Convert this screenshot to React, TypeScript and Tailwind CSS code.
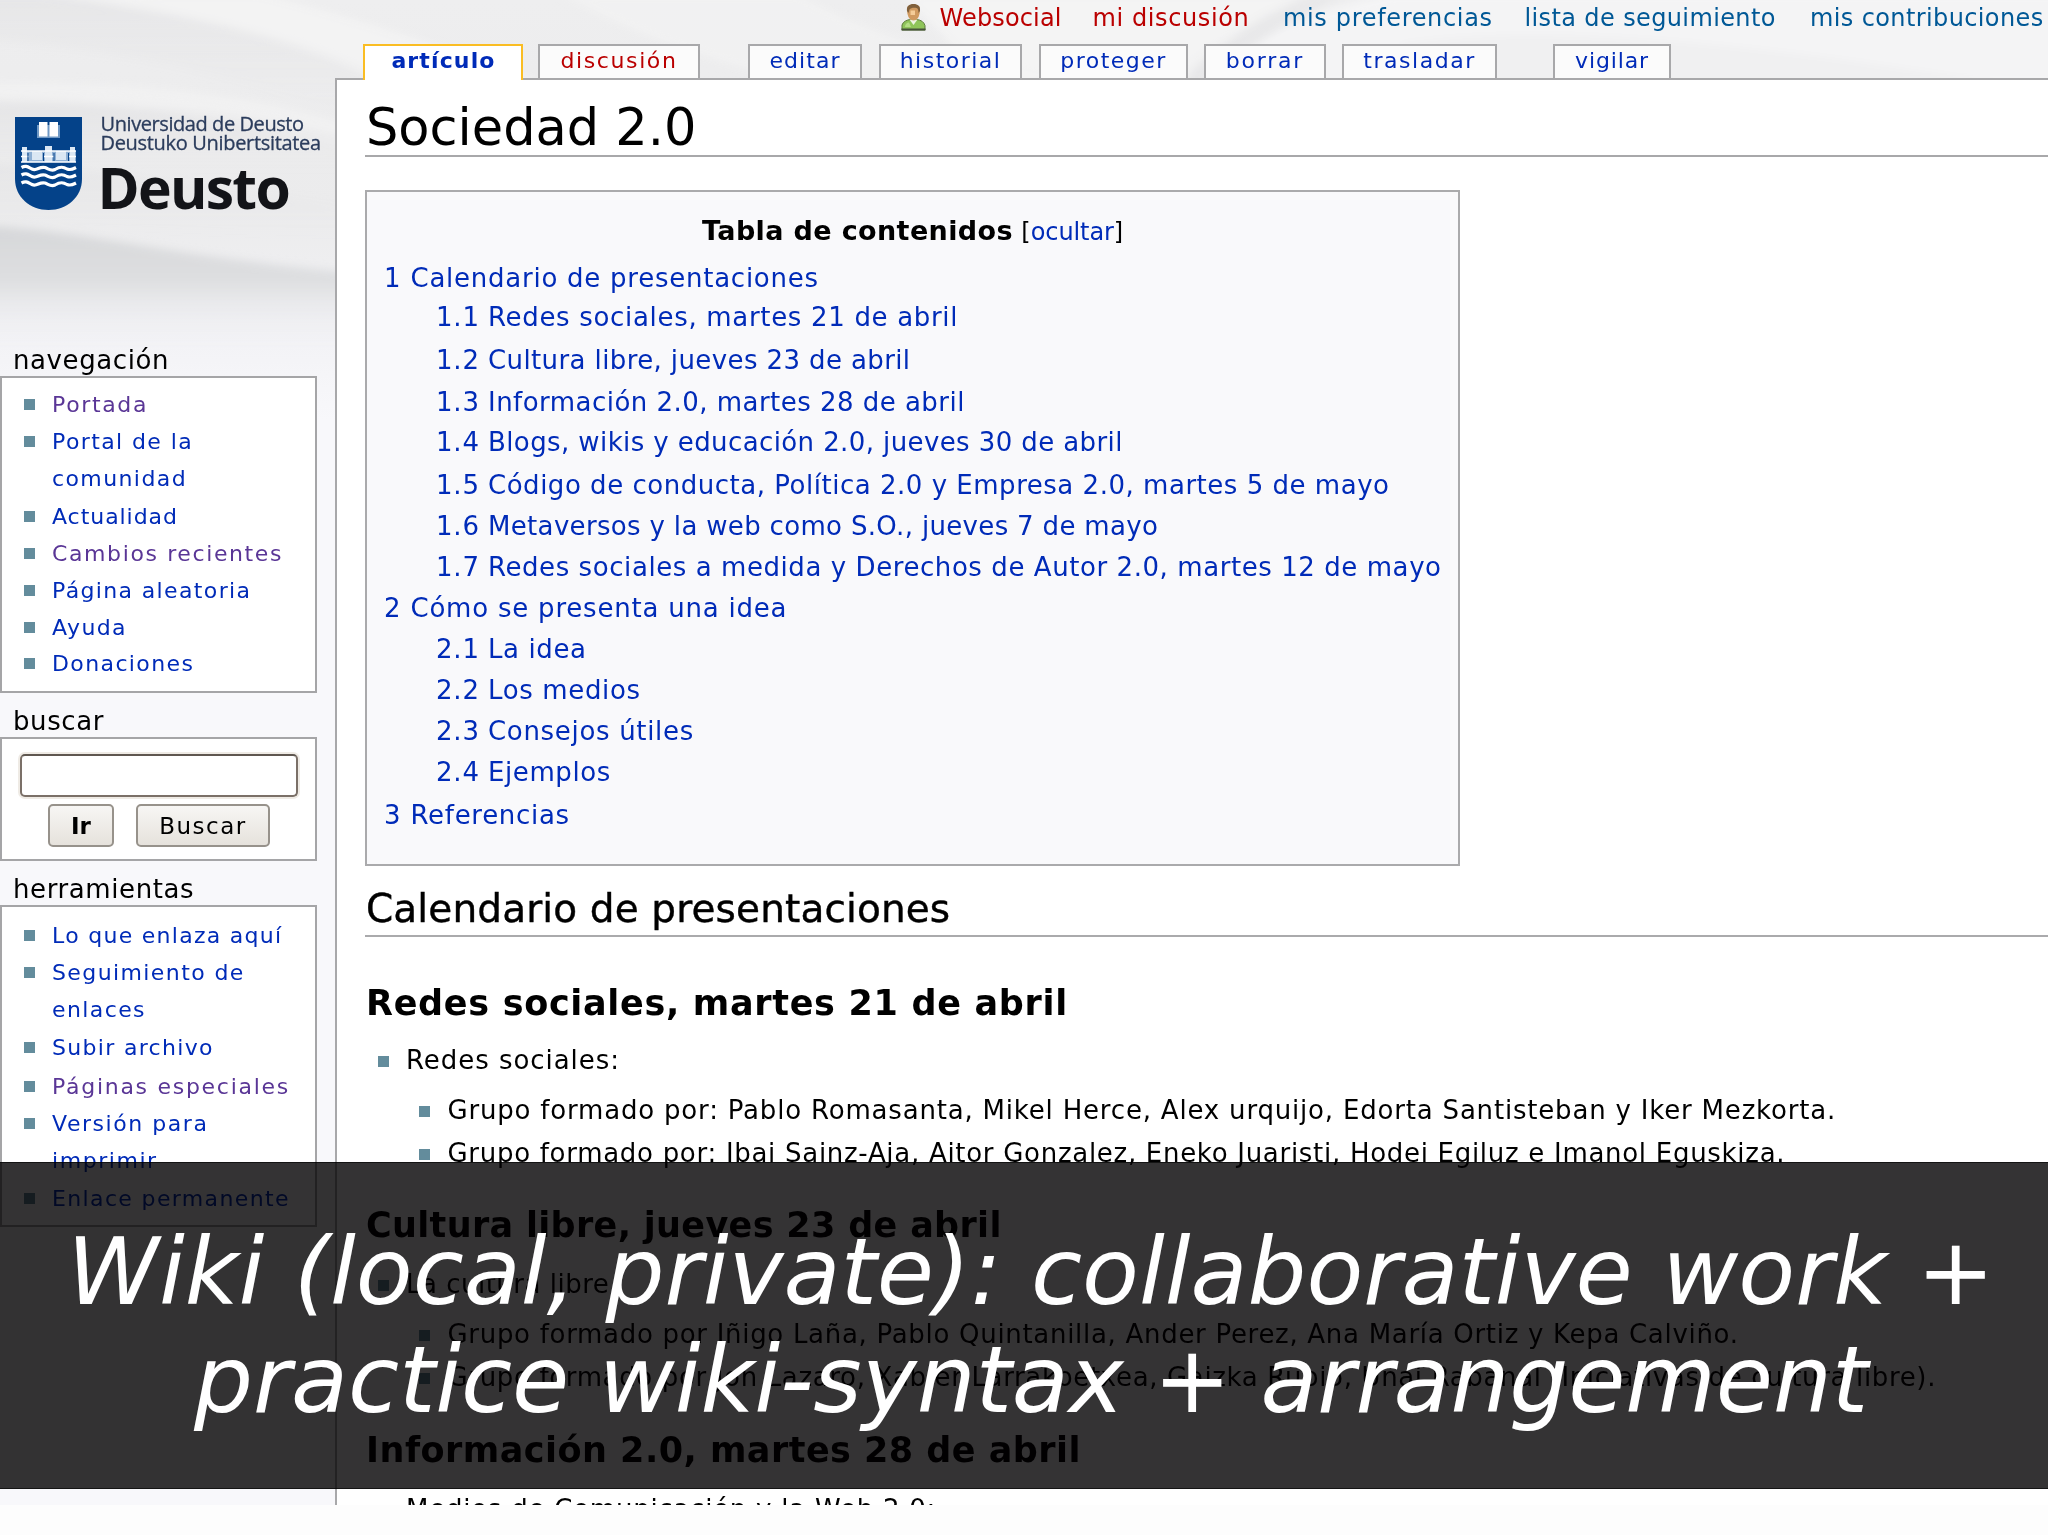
import React from 'react';
import clsx from 'clsx';

interface NavLink {
  lines: string[];
  track: string;
  height: string;
  visited?: boolean;
}

const personalLinks = [
  { label: 'Websocial', className: 'w-[153px] tracking-[0.15px] text-[#ba0000]' },
  { label: 'mi discusión', className: 'w-[190.5px] tracking-[0.6px] text-[#ba0000]' },
  { label: 'mis preferencias', className: 'w-[241.5px] tracking-[0.66px] text-[#005896]' },
  { label: 'lista de seguimiento', className: 'w-[285.5px] tracking-[0.38px] text-[#005896]' },
  { label: 'mis contribuciones', className: 'tracking-[0.38px] text-[#005896]' },
];

const tabs = [
  { label: 'discusión', className: 'ml-[15px] w-[162px] tracking-[1.6px] text-[#ba0000]' },
  { label: 'editar', className: 'ml-12 w-[114px] tracking-[1.06px] text-[#002bb8]' },
  { label: 'historial', className: 'ml-[17px] w-[143px] tracking-[1.47px] text-[#002bb8]' },
  { label: 'proteger', className: 'ml-[17px] w-[149px] tracking-[1.48px] text-[#002bb8]' },
  { label: 'borrar', className: 'ml-4 w-[122px] tracking-[1.8px] text-[#002bb8]' },
  { label: 'trasladar', className: 'ml-4 w-[155px] tracking-[1.54px] text-[#002bb8]' },
  { label: 'vigilar', className: 'ml-14 w-[118px] tracking-[0.86px] text-[#002bb8]' },
];

const navigation: NavLink[] = [
  { lines: ['Portada'], track: 'tracking-[1.65px]', height: 'h-[37px]', visited: true },
  { lines: ['Portal de la', 'comunidad'], track: 'tracking-[1.4px]', height: 'h-[75px]' },
  { lines: ['Actualidad'], track: 'tracking-[0.95px]', height: 'h-[37px]' },
  { lines: ['Cambios recientes'], track: 'tracking-[1.61px]', height: 'h-[37px]', visited: true },
  { lines: ['Página aleatoria'], track: 'tracking-[1.36px]', height: 'h-[37px]' },
  { lines: ['Ayuda'], track: 'tracking-[1.4px]', height: 'h-[36px]' },
  { lines: ['Donaciones'], track: 'tracking-[1.39px]', height: 'h-[37px]' },
];

const tools: NavLink[] = [
  { lines: ['Lo que enlaza aquí'], track: 'tracking-[1.28px]', height: 'h-[37px]' },
  { lines: ['Seguimiento de', 'enlaces'], track: 'tracking-[1.4px]', height: 'h-[75px]' },
  { lines: ['Subir archivo'], track: 'tracking-[1.31px]', height: 'h-[39px]' },
  { lines: ['Páginas especiales'], track: 'tracking-[1.72px]', height: 'h-[37px]', visited: true },
  { lines: ['Versión para', 'imprimir'], track: 'tracking-[1.55px]', height: 'h-[75px]' },
  { lines: ['Enlace permanente'], track: 'tracking-[1.36px]', height: 'h-[37px]' },
];

const toc = [
  { num: '1', text: 'Calendario de presentaciones', className: 'h-[39px] tracking-[0.75px]' },
  { num: '1.1', text: 'Redes sociales, martes 21 de abril', className: 'h-[43px] tracking-[0.68px]' },
  { num: '1.2', text: 'Cultura libre, jueves 23 de abril', className: 'h-[42px] tracking-[0.39px]' },
  { num: '1.3', text: 'Información 2.0, martes 28 de abril', className: 'h-[40px] tracking-[0.47px]' },
  { num: '1.4', text: 'Blogs, wikis y educación 2.0, jueves 30 de abril', className: 'h-[43px] tracking-[0.4px]' },
  { num: '1.5', text: 'Código de conducta, Política 2.0 y Empresa 2.0, martes 5 de mayo', className: 'h-[41px] tracking-[0.52px]' },
  { num: '1.6', text: 'Metaversos y la web como S.O., jueves 7 de mayo', className: 'h-[41px] tracking-[0.33px]' },
  { num: '1.7', text: 'Redes sociales a medida y Derechos de Autor 2.0, martes 12 de mayo', className: 'h-[41px] tracking-[0.57px]' },
  { num: '2', text: 'Cómo se presenta una idea', className: 'h-[41px] tracking-[0.78px]' },
  { num: '2.1', text: 'La idea', className: 'h-[41px] tracking-[0.6px]' },
  { num: '2.2', text: 'Los medios', className: 'h-[41px] tracking-[0.65px]' },
  { num: '2.3', text: 'Consejos útiles', className: 'h-[41px] tracking-[0.68px]' },
  { num: '2.4', text: 'Ejemplos', className: 'h-[43px] tracking-[0.6px]' },
  { num: '3', text: 'Referencias', className: 'h-[41px] tracking-[0.7px]' },
];

function Waves() {
  return (
    <svg className="absolute inset-0" width="2048" height="420" viewBox="0 0 2048 420" preserveAspectRatio="none">
      <defs>
        <linearGradient id="base" x1="0" y1="0" x2="0" y2="1">
          <stop offset="0" stopColor="#eeeeef" />
          <stop offset="0.5" stopColor="#ebebec" />
          <stop offset="0.82" stopColor="#f3f3f6" />
          <stop offset="1" stopColor="#f8f8fb" />
        </linearGradient>
        <linearGradient id="shadeSoft" x1="0" y1="0" x2="0" y2="1">
          <stop offset="0" stopColor="#dcdcde" />
          <stop offset="1" stopColor="#ededee" stopOpacity="0" />
        </linearGradient>
        <linearGradient id="shadeDeep" x1="0" y1="0" x2="0" y2="1">
          <stop offset="0" stopColor="#d6d7d9" />
          <stop offset="0.45" stopColor="#dedfe1" />
          <stop offset="1" stopColor="#f5f5f8" stopOpacity="0" />
        </linearGradient>
        <filter id="soft" x="-5%" y="-5%" width="110%" height="110%">
          <feGaussianBlur stdDeviation="4" />
        </filter>
      </defs>
      <rect width="2048" height="420" fill="url(#base)" />
      <g filter="url(#soft)">
        <path d="M40 -4 C150 8 280 32 375 72 L375 130 C260 80 130 50 -10 40 L-10 -4Z" fill="url(#shadeSoft)" opacity="0.45" />
        <path d="M-10 104 C90 100 200 112 345 150 L345 180 L-10 180Z" fill="url(#shadeSoft)" opacity="0.5" />
        <path d="M-10 98 C110 102 230 108 345 138 L345 122 C240 90 120 80 -10 82Z" fill="#f4f4f4" opacity="0.6" />
        <path d="M-10 165 C110 170 230 190 345 205 L345 235 L-10 222Z" fill="url(#shadeSoft)" opacity="0.35" />
        <path d="M-10 226 C90 232 170 256 345 272 L345 350 L-10 350Z" fill="url(#shadeDeep)" />
        <path d="M60 -6 C200 18 300 36 400 90 L560 90 C430 40 330 10 260 -6Z" fill="#f4f4f4" opacity="0.8" />
        <path d="M560 -6 C620 30 700 60 800 84 L1080 84 C960 60 860 30 800 -6Z" fill="#f4f4f4" opacity="0.6" />
        <path d="M900 -6 C940 30 960 60 1000 84 L1180 84 C1200 50 1260 20 1330 -6Z" fill="#f5f5f5" opacity="0.8" />
        <path d="M1200 84 C1230 50 1300 10 1390 -6 L2060 -6 L2060 84Z" fill="#f4f4f5" />
        <path d="M1400 44 C1560 20 1800 50 2000 84 L1480 84 C1440 70 1400 60 1400 44Z" fill="#ececee" opacity="0.6" />
        <path d="M1185 84 C1215 44 1260 16 1310 -6 L1345 -6 C1290 20 1240 50 1215 84Z" fill="#e6e6e7" opacity="0.7" />
      </g>
    </svg>
  );
}

function Shield() {
  return (
    <svg width="67" height="93" viewBox="0 0 67 93" className="mt-[27px] shrink-0">
      <path d="M0 0H67V62C67 80 52 93 33.500 93C15 93 0 80 0 62Z" fill="#044289" />
      {/* open book */}
      <path d="M22 8H45V21H22Z" fill="#6f98c4" />
      <path d="M24 5H32.500V19.500H24ZM34.500 5H43V19.500H34.500Z" fill="#ffffff" />
      {/* bridge and towers */}
      <path d="M7 34H61V45H7Z" fill="#8fb0d4" />
      <path d="M7 30H12V45H7ZM55 30H60V45H55ZM30 29H37V45H30ZM17 34H27V43H17ZM41 34H51V43H41Z" fill="#dbe7f3" />
      <path d="M6 34H61M6 39.500H14M28 39.500H39M53 39.500H61M6 45H61" stroke="#ffffff" strokeWidth="1.400" />
      <path d="M13 36V44M28.500 36V44M39 36V44M53.500 36V44" stroke="#044289" strokeWidth="1" />
      {/* water */}
      <path
        d="M6.500 50.500C11 48 13 50 17 52C22 54.500 24 49 30 50.500C34 52 36 54.500 40 52.500C45 49.500 48 49.500 52 52C56 53.500 58 52 61 50.500M6.500 58C11 55.500 13 57.500 17 59.500C22 62 24 56.500 30 58C34 59.500 36 62 40 60C45 57 48 57 52 59.500C56 61 58 59.500 61 58M6.500 66C11 63.500 13 65.500 17 67.500C22 70 24 64.500 30 66C34 67.500 36 70 40 68C45 65 48 65 52 67.500C56 69 58 67.500 61 66"
        fill="none"
        stroke="#ffffff"
        strokeWidth="3.200"
      />
    </svg>
  );
}

function UserIcon() {
  return (
    <svg width="25" height="28" viewBox="0 0 25 28" className="mt-[3px] mr-[13.5px] shrink-0">
      <path d="M1 27V22C2 18.500 6 17 9 16.500H16C20 17 23 19 24 22.500V27Z" fill="#8fc45a" stroke="#5c7a3c" strokeWidth="1" />
      <path d="M8.500 16.500L12.500 22L16.500 16.500Z" fill="#eef3e2" />
      <path d="M0.500 25.500H24.500V27.500H0.500Z" fill="#46523a" />
      <path d="M4 24C4 21 6 19.500 8 19.500L10 24Z" fill="#b4dd84" />
      <path d="M6.500 4C8 0.500 17 0.500 18.500 4C19.500 8 18.500 13 16.500 15.500C14.500 18 10.500 18 8.500 15.500C6.500 13 5.500 8 6.500 4Z" fill="#d09a60" />
      <path d="M6 8C5.500 3 8 1 12.500 1C17 1 19.500 3 19 8L17.500 10C17.500 7 17 5.500 15.500 5C12.500 4.500 9.500 5 8.500 6.500L7.500 10Z" fill="#80603c" />
      <path d="M9.500 7.500H14V12H9.500Z" fill="#f5cc98" />
    </svg>
  );
}

function Bullet({ className }: { className: string }) {
  return <span className={clsx('h-[11px] w-[11px] shrink-0 bg-[#638c9c]', className)} />;
}

function Portlet({ title, className, children }: { title: string; className: string; children: React.ReactNode }) {
  return (
    <section>
      <h5 className="h-8 pl-[13px] text-[26px] leading-8 tracking-[0.6px]">{title}</h5>
      <div className={clsx('w-[317px] border-2 border-[#a5a5a7] bg-white', className)}>{children}</div>
    </section>
  );
}

function LinkList({ links }: { links: NavLink[] }) {
  return (
    <ul>
      {links.map((link) => (
        <li key={link.lines[0]} className={clsx('flex pl-[22px] text-[22px] leading-[37px]', link.height, link.track)}>
          <Bullet className="mt-[13px] mr-[17px]" />
          <a className={clsx('whitespace-nowrap', link.visited ? 'text-[#5a3696]' : 'text-[#002bb8]')}>
            {link.lines.map((line) => (
              <span key={line} className="block">
                {line}
              </span>
            ))}
          </a>
        </li>
      ))}
    </ul>
  );
}

function Item({ nested, className, children }: { nested?: boolean; className: string; children: React.ReactNode }) {
  return (
    <li className={clsx('flex whitespace-nowrap text-[26px] leading-10', nested ? 'pl-[54px]' : 'pl-[13px]', className)}>
      <Bullet className={clsx('mt-4', nested ? 'mr-[17.5px]' : 'mr-[17px]')} />
      <span>{children}</span>
    </li>
  );
}

function Sidebar() {
  return (
    <aside className="w-[336px] shrink-0">
      <div className="flex h-[344px] pt-[90px] pl-[15px]">
        <Shield />
        <div className="ml-[18.5px] pt-[22px] font-['Open_Sans'] whitespace-nowrap">
          <p className="h-[19px] text-[20px] leading-6 font-medium tracking-[-0.42px] text-[#2b3c5c] [-webkit-text-stroke:0.3px]">
            Universidad de Deusto
          </p>
          <p className="h-[19px] text-[20px] leading-6 font-medium tracking-[-0.32px] text-[#2b3c5c] [-webkit-text-stroke:0.3px]">
            Deustuko Unibertsitatea
          </p>
          <p className="-ml-[3px] pt-[6px] text-[57px] leading-[62px] font-bold tracking-[-1.7px] text-[#131418]">Deusto</p>
        </div>
      </div>
      <div className="flex flex-col gap-3">
        <Portlet title="navegación" className="h-[317px] pt-2">
          <LinkList links={navigation} />
        </Portlet>
        <Portlet title="buscar" className="h-[124px] pt-[15px]">
          <input className="ml-[18px] block h-[43px] w-[278px] rounded-[5px] border-2 border-[#7b7068] border-t-[#5f5750] bg-white shadow-[0_0_0_2px_#efebe5]" />
          <div className="mt-[7px] flex gap-[22px] pl-[46px]">
            <button className="h-[43px] w-[66px] rounded-[5px] border-2 border-[#97928b] bg-linear-to-b from-[#f7f6f4] to-[#e6e2dc] text-[23px] leading-[38px] font-bold">
              Ir
            </button>
            <button className="h-[43px] w-[134px] rounded-[5px] border-2 border-[#97928b] bg-linear-to-b from-[#f7f6f4] to-[#e6e2dc] text-[23px] leading-[38px] tracking-[1.48px]">
              Buscar
            </button>
          </div>
        </Portlet>
        <Portlet title="herramientas" className="h-[322px] pt-2.5">
          <LinkList links={tools} />
        </Portlet>
      </div>
    </aside>
  );
}

function TableOfContents() {
  return (
    <div className="mt-[33px] h-[676px] w-[1095px] border-2 border-[#aaaaac] bg-[#f9f9fb] pt-[19px]">
      <div className="flex h-[47px] items-baseline pl-[335px] leading-10">
        <h2 className="text-[27px] font-bold tracking-[0.37px]">Tabla de contenidos</h2>
        <span className="ml-[8.5px] text-[24px] tracking-[-0.08px]">
          [<a className="text-[#002bb8]">ocultar</a>]
        </span>
      </div>
      <ul className="text-[26px] leading-[41px] whitespace-nowrap text-[#002bb8]">
        {toc.map((entry) => (
          <li key={entry.num} className={clsx('flex', entry.num.length > 1 ? 'pl-[69px]' : 'pl-[17px]', entry.className)}>
            <span className={clsx('shrink-0', entry.num.length > 1 ? 'w-[52px] tracking-[0.8px]' : 'w-[26.5px]')}>{entry.num}</span>
            <span>{entry.text}</span>
          </li>
        ))}
      </ul>
    </div>
  );
}

function Article() {
  return (
    <main className="-ml-px h-[1430px] border-t-2 border-l-2 border-[#a8a8aa] bg-white pt-[13px] pl-7">
      <h1 className="h-[64px] border-b-2 border-[#a8a8aa] pl-px text-[51px] leading-[69px]">Sociedad 2.0</h1>
      <TableOfContents />
      <h2 className="mt-[18px] h-[53px] border-b-2 border-[#aaaaac] pl-px text-[39px] leading-[50px] tracking-[0.12px] [-webkit-text-stroke:0.4px]">
        Calendario de presentaciones
      </h2>

      <h3 className="mt-11 pl-px text-[35px] leading-[44px] font-bold tracking-[0.69px]">Redes sociales, martes 21 de abril</h3>
      <ul className="mt-[15px]">
        <Item className="h-[50px] tracking-[0.95px]">Redes sociales:</Item>
        <Item nested className="h-[43px] tracking-[0.81px]">
          Grupo formado por: Pablo Romasanta, Mikel Herce, Alex urquijo, Edorta Santisteban y Iker Mezkorta.
        </Item>
        <Item nested className="h-[70px] tracking-[0.71px]">
          Grupo formado por: Ibai Sainz-Aja, Aitor Gonzalez, Eneko Juaristi, Hodei Egiluz e Imanol Eguskiza.
        </Item>
      </ul>

      <h3 className="pl-px text-[35px] leading-[44px] font-bold tracking-[0.33px]">Cultura libre, jueves 23 de abril</h3>
      <ul className="mt-[17px]">
        <Item className="h-[50px] tracking-[0.5px]">La cultura libre</Item>
        <Item nested className="h-[43px] tracking-[0.7px]">
          Grupo formado por Iñigo Laña, Pablo Quintanilla, Ander Perez, Ana María Ortiz y Kepa Calviño.
        </Item>
        <Item nested className="h-[71px] tracking-[0.65px]">
          Grupo formado por Jon Lazaro, Xabier Larrakoetxea, Gaizka Rubio, Unai Rabanal (Iniciativas de cultura libre).
        </Item>
      </ul>

      <h3 className="pl-px text-[35px] leading-[44px] font-bold tracking-[0.47px]">Información 2.0, martes 28 de abril</h3>
      <ul className="mt-[17px]">
        <Item className="h-[50px] tracking-[0.76px]">Medios de Comunicación y la Web 2.0:</Item>
      </ul>
    </main>
  );
}

export default function App() {
  return (
    <div className="relative h-[1535px] w-[2048px] overflow-hidden bg-[#fdfdfd] font-['DejaVu_Sans',sans-serif] text-black">
      <div className="relative h-[1505px] overflow-hidden bg-[#f8f8fb]">
        <Waves />
        <div className="relative flex">
          <Sidebar />
          <div className="min-w-0 flex-1">
            <nav className="flex h-[44px] pl-[565px] text-[24px] leading-[37px] whitespace-nowrap">
              <UserIcon />
              {personalLinks.map((link) => (
                <a key={link.label} className={clsx('shrink-0', link.className)}>
                  {link.label}
                </a>
              ))}
            </nav>
            <nav className="relative z-10 flex h-[34px] pl-[27px] text-center text-[22px] leading-[30px]">
              <a className="h-[36px] w-[160px] border-2 border-b-0 border-[#fabd23] bg-white pl-px font-bold tracking-[1.14px] text-[#002bb8]">
                artículo
              </a>
              {tabs.map((tab) => (
                <a key={tab.label} className={clsx('h-[34px] border-2 border-b-0 border-[#a8a8aa] bg-[#fbfbfb]', tab.className)}>
                  {tab.label}
                </a>
              ))}
            </nav>
            <Article />
          </div>
        </div>
      </div>

      {/* Slide caption */}
      <div className="absolute top-[1162px] left-0 h-[327px] w-full border-y border-black/60 bg-[#010001]/80 pt-[55px] text-[93px] leading-[108px] whitespace-nowrap text-white italic">
        <p className="pl-[67px] tracking-[-0.05px]">Wiki (local, private): collaborative work +</p>
        <p className="pl-[194px] tracking-[-0.1px]">practice wiki-syntax + arrangement</p>
      </div>
    </div>
  );
}
